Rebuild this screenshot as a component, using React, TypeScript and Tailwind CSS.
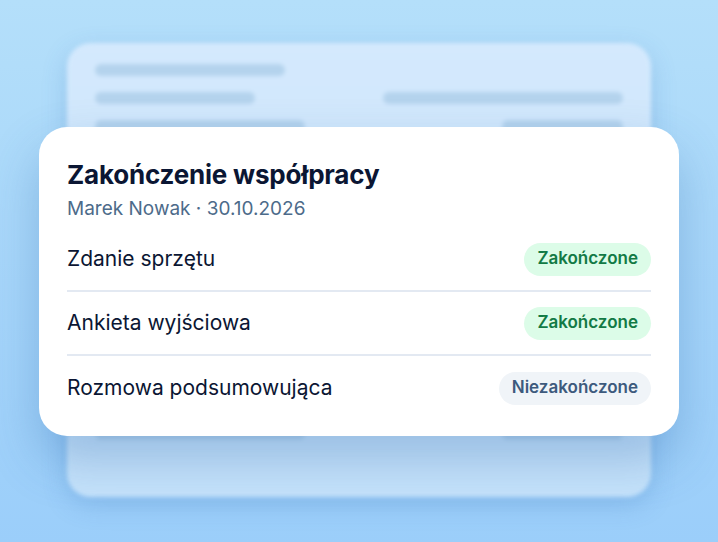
const rows = [
  { left: "w-[190px]", right: "" },
  { left: "w-[160px]", right: "w-[240px]" },
  { left: "w-[210px]", right: "w-[121px]" },
  { left: "w-[180px]", right: "w-[150px]" },
  { left: "w-[210px]", right: "w-[121px]" },
  { left: "w-[180px]", right: "w-[150px]" },
  { left: "w-[210px]", right: "w-[121px]" },
  { left: "w-[180px]", right: "w-[150px]" },
  { left: "w-[210px]", right: "w-[121px]" },
  { left: "w-[180px]", right: "w-[150px]" },
  { left: "w-[210px]", right: "w-[121px]" },
  { left: "w-[180px]", right: "w-[150px]" },
  { left: "w-[210px]", right: "w-[121px]" },
  { left: "w-[210px]", right: "w-[121px]" },
];

const items = [
  { label: "Zdanie sprzętu", done: true },
  { label: "Ankieta wyjściowa", done: true },
  { label: "Rozmowa podsumowująca", done: false },
];

export default function App() {
  return (
    <div
      className="w-[718px] h-[542px] overflow-hidden flex items-center justify-center bg-gradient-to-b from-[#b4dffa] to-[#9bcefa]"
      style={{ fontFamily: "Inter, 'Noto Sans', sans-serif" }}
    >
      <div className="relative w-[584px] h-[454px] mt-[-2px]">
        {/* blurred document behind */}
        <div className="w-full h-full rounded-[24px] bg-gradient-to-b from-[#d4e9fd] to-[#c6e3fb] blur-[2px] shadow-[0_8px_24px_rgba(60,120,190,0.25)] px-7 pt-[21px] flex flex-col gap-4 overflow-hidden">
          {rows.map((r, i) => (
            <div key={i} className="flex justify-between shrink-0">
              <div className={`h-3 rounded-full bg-[#b4d3ed] ${r.left}`} />
              {r.right && <div className={`h-3 rounded-full bg-[#b4d3ed] ${r.right}`} />}
            </div>
          ))}
        </div>

        {/* front card */}
        <div className="absolute left-[-28px] top-[84px] w-[640px] bg-white rounded-[28px] shadow-[0_24px_50px_rgba(40,100,170,0.3)] px-7 pt-8 pb-4">
          <h1 className="text-[26px] leading-[32px] font-bold text-[#0b1633] tracking-[-0.2px]">
            Zakończenie współpracy
          </h1>
          <p className="mt-[6px] text-[19px] leading-6 text-[#4d6b8a]">
            Marek Nowak · 30.10.2026
          </p>
          <div className="mt-[7px]">
            {items.map((it, i) => (
              <div
                key={it.label}
                className={`h-16 flex items-center justify-between ${
                  i < items.length - 1 ? "border-b-2 border-[#e3e9f2]" : ""
                }`}
              >
                <span className="text-[21px] text-[#0b1633]">{it.label}</span>
                {it.done ? (
                  <span className="h-[33px] px-[13px] rounded-full bg-[#dcfce8] text-[#127a45] text-[17px] font-semibold flex items-center">
                    Zakończone
                  </span>
                ) : (
                  <span className="h-[33px] px-[13px] rounded-full bg-[#f0f4f8] text-[#3d5a7d] text-[17px] font-semibold flex items-center">
                    Niezakończone
                  </span>
                )}
              </div>
            ))}
          </div>
        </div>
      </div>
    </div>
  );
}
